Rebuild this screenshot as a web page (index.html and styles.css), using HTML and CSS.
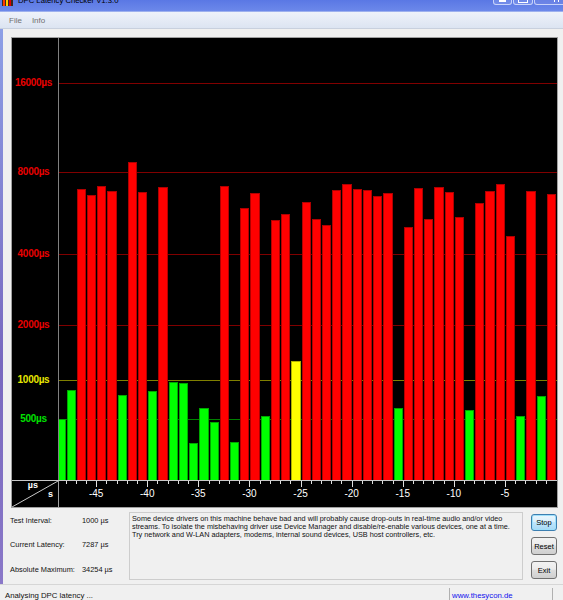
FILE: index.html
```html
<!DOCTYPE html>
<html>
<head>
<meta charset="utf-8">
<title>DPC Latency Checker V1.3.0</title>
<link rel="stylesheet" href="styles.css">
</head>
<body>
<div class="window">
  <div class="titlebar">
    <svg class="appicon" width="11" height="11" viewBox="0 0 11 11">
      <rect x="0" y="0" width="11" height="11" fill="#3a2a20"/>
      <rect x="1" y="5" width="2" height="6" fill="#ff3a00"/>
      <rect x="4" y="2" width="2" height="9" fill="#ffd000"/>
      <rect x="7" y="4" width="2" height="7" fill="#e00000"/>
    </svg>
    <span class="title">DPC Latency Checker V1.3.0</span>
    <div class="caption-btns">
      <span class="cb cb-min"><i></i></span>
      <span class="cb cb-max"><i></i></span>
      <span class="cb cb-close"><i></i><i></i></span>
    </div>
  </div>
  <div class="menubar"><span>File</span><span>Info</span></div>
  <div class="frame">
    <div class="frame-edge"></div>
    <div class="client">
      <div class="chart">
        <div class="plot-row">
          <div class="ylabels">
            <span class="ylab red" style="top:39px">16000µs</span>
            <span class="ylab red" style="top:128px">8000µs</span>
            <span class="ylab red" style="top:210px">4000µs</span>
            <span class="ylab red" style="top:281px">2000µs</span>
            <span class="ylab yel" style="top:336px">1000µs</span>
            <span class="ylab grn" style="top:375px">500µs</span>
          </div>
          <div class="plot">
            <div class="gline red" style="top:45px"></div>
            <div class="gline red" style="top:134px"></div>
            <div class="gline red" style="top:216px"></div>
            <div class="gline red" style="top:287px"></div>
            <div class="gline yel" style="top:342px"></div>
            <div class="gline grn" style="top:381px"></div>
            <div class="bar g" style="height:61px"></div>
            <div class="bar g" style="height:90px"></div>
            <div class="bar r" style="height:291px"></div>
            <div class="bar r" style="height:285px"></div>
            <div class="bar r" style="height:294px"></div>
            <div class="bar r" style="height:289px"></div>
            <div class="bar g" style="height:85px"></div>
            <div class="bar r" style="height:318px"></div>
            <div class="bar r" style="height:288px"></div>
            <div class="bar g" style="height:89px"></div>
            <div class="bar r" style="height:293px"></div>
            <div class="bar g" style="height:98px"></div>
            <div class="bar g" style="height:97px"></div>
            <div class="bar g" style="height:37px"></div>
            <div class="bar g" style="height:72px"></div>
            <div class="bar g" style="height:58px"></div>
            <div class="bar r" style="height:294px"></div>
            <div class="bar g" style="height:38px"></div>
            <div class="bar r" style="height:272px"></div>
            <div class="bar r" style="height:287px"></div>
            <div class="bar g" style="height:64px"></div>
            <div class="bar r" style="height:260px"></div>
            <div class="bar r" style="height:266px"></div>
            <div class="bar y" style="height:119px"></div>
            <div class="bar r" style="height:278px"></div>
            <div class="bar r" style="height:261px"></div>
            <div class="bar r" style="height:255px"></div>
            <div class="bar r" style="height:290px"></div>
            <div class="bar r" style="height:296px"></div>
            <div class="bar r" style="height:291px"></div>
            <div class="bar r" style="height:290px"></div>
            <div class="bar r" style="height:284px"></div>
            <div class="bar r" style="height:287px"></div>
            <div class="bar g" style="height:72px"></div>
            <div class="bar r" style="height:253px"></div>
            <div class="bar r" style="height:292px"></div>
            <div class="bar r" style="height:261px"></div>
            <div class="bar r" style="height:293px"></div>
            <div class="bar r" style="height:288px"></div>
            <div class="bar r" style="height:263px"></div>
            <div class="bar g" style="height:70px"></div>
            <div class="bar r" style="height:277px"></div>
            <div class="bar r" style="height:289px"></div>
            <div class="bar r" style="height:296px"></div>
            <div class="bar r" style="height:244px"></div>
            <div class="bar g" style="height:64px"></div>
            <div class="bar r" style="height:289px"></div>
            <div class="bar g" style="height:84px"></div>
            <div class="bar r" style="height:286px"></div>
          </div>
        </div>
        <div class="axis-line"></div>
        <div class="axis-row">
          <div class="corner">
            <svg class="diag" width="46" height="26" viewBox="0 0 46 26"><line x1="0" y1="26" x2="46" y2="0" stroke="#c8c8c8" stroke-width="1"/></svg>
            <span class="u1">µs</span>
            <span class="u2">s</span>
          </div>
          <div class="xaxis">
            <div class="tc"></div><div class="tc"></div><div class="tc"></div><div class="tc"></div><div class="tc major"><span class="xl">-45</span></div>
            <div class="tc"></div><div class="tc"></div><div class="tc"></div><div class="tc"></div><div class="tc major"><span class="xl">-40</span></div>
            <div class="tc"></div><div class="tc"></div><div class="tc"></div><div class="tc"></div><div class="tc major"><span class="xl">-35</span></div>
            <div class="tc"></div><div class="tc"></div><div class="tc"></div><div class="tc"></div><div class="tc major"><span class="xl">-30</span></div>
            <div class="tc"></div><div class="tc"></div><div class="tc"></div><div class="tc"></div><div class="tc major"><span class="xl">-25</span></div>
            <div class="tc"></div><div class="tc"></div><div class="tc"></div><div class="tc"></div><div class="tc major"><span class="xl">-20</span></div>
            <div class="tc"></div><div class="tc"></div><div class="tc"></div><div class="tc"></div><div class="tc major"><span class="xl">-15</span></div>
            <div class="tc"></div><div class="tc"></div><div class="tc"></div><div class="tc"></div><div class="tc major"><span class="xl">-10</span></div>
            <div class="tc"></div><div class="tc"></div><div class="tc"></div><div class="tc"></div><div class="tc major"><span class="xl">-5</span></div>
            <div class="tc"></div><div class="tc"></div><div class="tc"></div><div class="tc"></div>
          </div>
        </div>
      </div>
      <div class="panel">
        <div class="info">
          <span>Test Interval:</span><span>1000 µs</span>
          <span>Current Latency:</span><span>7287 µs</span>
          <span>Absolute Maximum:</span><span>34254 µs</span>
        </div>
        <div class="msg">Some device drivers on this machine behave bad and will probably cause drop-outs in real-time audio and/or video<br>streams. To isolate the misbehaving driver use Device Manager and disable/re-enable various devices, one at a time.<br>Try network and W-LAN adapters, modems, internal sound devices, USB host controllers, etc.</div>
        <div class="buttons">
          <button class="btn default">Stop</button>
          <button class="btn">Reset</button>
          <button class="btn">Exit</button>
        </div>
      </div>
    </div>
  </div>
  <div class="statusbar">
    <div class="st-main">Analysing DPC latency ...</div>
    <div class="st-link">www.thesycon.de</div>
    <div class="st-grip"></div>
  </div>
</div>
</body>
</html>
```
FILE: styles.css
```css
html, body {
  margin: 0;
  padding: 0;
}
body {
  width: 563px;
  height: 600px;
  overflow: hidden;
  background: #f0f0f0;
  font-family: "Liberation Sans", Arial, sans-serif;
}
.window {
  width: 563px;
  height: 600px;
  display: flex;
  flex-direction: column;
  background: #f0f0f0;
}

/* title bar */
.titlebar {
  height: 11px;
  flex: none;
  display: flex;
  align-items: flex-start;
  overflow: hidden;
  background: linear-gradient(#5a78e4, #6c88ea);
  border-bottom: 1px solid #9db0ee;
}
.appicon {
  margin: -5px 0 0 2px;
  flex: none;
}
.title {
  margin: -4px 0 0 5px;
  font-size: 7.7px;
  line-height: 10px;
  color: #000;
  white-space: nowrap;
}
.caption-btns {
  margin-left: auto;
  margin-right: -15px;
  display: flex;
  gap: 1px;
}
.cb {
  height: 4px;
  border: 1px solid rgba(230, 236, 255, 0.75);
  border-top: none;
  border-radius: 0 0 3px 3px;
  background: rgba(255, 255, 255, 0.12);
  display: flex;
  justify-content: center;
  align-items: flex-start;
  gap: 3px;
}
.cb i {
  display: block;
  background: #fff;
}
.cb-min { width: 17px; }
.cb-min i { width: 7px; height: 2px; }
.cb-max { width: 18px; }
.cb-max i { width: 8px; height: 2px; border: 1px solid #fff; border-top: none; background: transparent; }
.cb-close { width: 42px; background: rgba(120, 140, 230, 0.5); }
.cb-close i { width: 1px; height: 2px; }

/* menu */
.menubar {
  height: 16px;
  flex: none;
  display: flex;
  align-items: center;
  gap: 10px;
  padding-left: 9px;
  background: linear-gradient(#eef2fa, #dce4f2);
  border-bottom: 1px solid #c8d0de;
  font-size: 8px;
  color: #707070;
}

/* frame */
.frame {
  display: flex;
  flex: none;
}
.frame-edge {
  width: 3px;
  flex: none;
  background: linear-gradient(#8d9fe6, #7868bf 60%, #8a78c8);
}
.client {
  flex: 1;
  display: flex;
  flex-direction: column;
}

/* chart */
.chart {
  margin: 8px 0 0 8px;
  width: 547px;
  box-sizing: border-box;
  border: 1px solid #a0a0a0;
  background: #000;
}
.plot-row {
  display: flex;
  height: 442px;
}
.ylabels {
  width: 46px;
  flex: none;
  position: relative;
}
.ylab {
  position: absolute;
  left: 0;
  right: 3px;
  text-align: center;
  font-size: 10px;
  line-height: 12px;
  font-weight: bold;
  letter-spacing: -0.3px;
}
.ylab.red { color: #e80000; }
.ylab.yel { color: #e6e600; }
.ylab.grn { color: #00e000; }
.plot {
  flex: 1;
  position: relative;
  border-left: 1px solid #808080;
  display: flex;
  justify-content: flex-end;
  align-items: flex-end;
  overflow: hidden;
}
.gline {
  position: absolute;
  left: 0;
  right: 0;
  height: 1px;
}
.gline.red { background: #800000; }
.gline.yel { background: #808000; }
.gline.grn { background: #008000; }
.bar {
  flex: none;
  width: 9.23px;
  margin-right: 1px;
  box-sizing: border-box;
  border: 1px solid;
  border-bottom: none;
  position: relative;
  z-index: 1;
}
.bar.r { background: #ff0000; border-color: #b00000; }
.bar.g { background: #00ff00; border-color: #00a800; }
.bar.y { background: #ffff00; border-color: #b0b000; }
.axis-line {
  height: 1px;
  background: #c8c8c8;
}
.axis-row {
  display: flex;
  height: 26px;
}
.corner {
  width: 46px;
  flex: none;
  position: relative;
  display: flex;
  flex-direction: column;
  align-items: flex-end;
  color: #fff;
  font-size: 9px;
  font-weight: bold;
  line-height: 9px;
}
.diag {
  position: absolute;
  left: 0;
  top: 0;
}
.u1 { margin-right: 20px; }
.u2 { margin-right: 5px; }
.xaxis {
  flex: 1;
  border-left: 1px solid #a0a0a0;
  display: flex;
  justify-content: flex-end;
  overflow: hidden;
}
.tc {
  flex: none;
  width: 10.23px;
  position: relative;
}
.tc::before {
  content: "";
  position: absolute;
  left: -1px;
  top: 0;
  width: 1px;
  height: 3px;
  background: #e0e0e0;
}
.tc.major::before {
  height: 6px;
}
.xl {
  position: absolute;
  left: -1px;
  top: 7px;
  transform: translateX(-50%);
  color: #fff;
  font-size: 10px;
  line-height: 12px;
  white-space: nowrap;
}

/* lower panel */
.panel {
  display: flex;
  height: 76px;
  padding-left: 7px;
  font-size: 7.4px;
  color: #111;
}
.info {
  width: 119px;
  flex: none;
  display: grid;
  grid-template-columns: 72px auto;
  grid-auto-rows: 9px;
  row-gap: 15.5px;
  align-content: start;
  padding-top: 7.5px;
  line-height: 9px;
  white-space: nowrap;
}
.msg {
  width: 394px;
  height: 68px;
  flex: none;
  box-sizing: border-box;
  margin-top: 4px;
  border: 1px solid #cdcdcd;
  padding: 2px 0 0 2px;
  font-size: 7.3px;
  line-height: 8.2px;
  white-space: nowrap;
  overflow: hidden;
}
.buttons {
  margin: 6px 0 0 8px;
  display: flex;
  flex-direction: column;
  gap: 6px;
}
.btn {
  width: 26px;
  height: 18px;
  padding: 0;
  box-sizing: border-box;
  border: 1px solid #707070;
  border-radius: 3px;
  background: linear-gradient(#f2f2f2, #ebebeb 45%, #dddddd 50%, #cfcfcf);
  font-family: "Liberation Sans", Arial, sans-serif;
  font-size: 7.5px;
  color: #000;
}
.btn.default {
  height: 17px;
  border-color: #3c7fb1;
  background: linear-gradient(#eaf6fd, #d9f0fc 45%, #bee6fd 50%, #a7d9f5);
  box-shadow: inset 0 0 0 1px #9fe0fb;
}

/* status bar */
.statusbar {
  flex: 1;
  display: flex;
  border-top: 1px solid #d6d6d6;
  font-size: 7.8px;
  line-height: 10px;
}
.st-main {
  width: 444px;
  flex: none;
  padding: 6px 0 0 5px;
  color: #111;
  white-space: nowrap;
}
.st-link {
  width: 100px;
  flex: none;
  margin-top: 3px;
  border-left: 1px solid #b0b0b0;
  padding: 3px 0 0 2px;
  color: #1010ee;
  white-space: nowrap;
}
.st-grip {
  flex: 1;
  margin-top: 3px;
  border-left: 1px solid #b0b0b0;
}
```
